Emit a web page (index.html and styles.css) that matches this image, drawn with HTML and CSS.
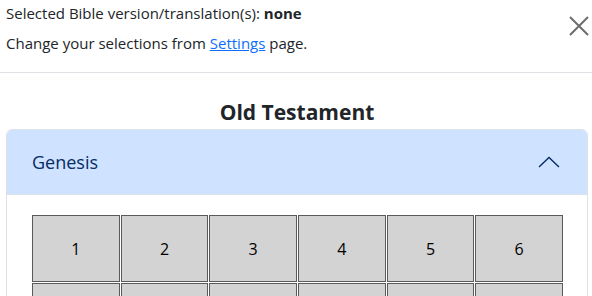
FILE: index.html
```html
<!DOCTYPE html>
<html lang="en">
<head>
    <meta charset="UTF-8">
    <title>Bible Books</title>
    <link rel="stylesheet" href="styles.css">
</head>
<body>
    <header class="top-bar">
        <div class="selection-info">
            <p class="line-one">Selected Bible version/translation(s): <b>none</b></p>
            <p class="line-two">Change your selections from <a href="#settings">Settings</a> page.</p>
        </div>
        <button class="close-btn" aria-label="Close">
            <svg width="22" height="22" viewBox="0 0 22 22">
                <path d="M2 2 L20 20 M20 2 L2 20" stroke="#6c6c6c" stroke-width="2" fill="none"/>
            </svg>
        </button>
    </header>

    <main class="content">
        <h2 class="testament-title">Old Testament</h2>
        <div class="accordion">
            <div class="accordion-header">
                <span class="book-name">Genesis</span>
                <svg class="chevron" width="22" height="12" viewBox="0 0 22 12">
                    <path d="M1 11 L11 1.5 L21 11" stroke="#052c65" stroke-width="1.4" fill="none"/>
                </svg>
            </div>
            <div class="accordion-body">
                <div class="chapter-grid">
                    <button class="chapter">1</button>
                    <button class="chapter">2</button>
                    <button class="chapter">3</button>
                    <button class="chapter">4</button>
                    <button class="chapter">5</button>
                    <button class="chapter">6</button>
                    <button class="chapter">7</button>
                    <button class="chapter">8</button>
                    <button class="chapter">9</button>
                    <button class="chapter">10</button>
                    <button class="chapter">11</button>
                    <button class="chapter">12</button>
                </div>
            </div>
        </div>
    </main>
</body>
</html>
```

FILE: styles.css
```css
body {
    margin: 0;
    font-family: "Open Sans", "Noto Sans", sans-serif;
    color: #212529;
    background-color: #ffffff;
    overflow: hidden;
}
.top-bar {
    display: flex;
    justify-content: space-between;
    align-items: flex-start;
    border-bottom: 1px solid #dee2e6;
    height: 72px;
}
.selection-info {
    padding-left: 6px;
}
.selection-info p {
    margin: 0;
    font-size: 15px;
    line-height: 24px;
}
.line-one {
    padding-top: 1px;
}
.line-two {
    padding-top: 6px;
}
.selection-info a {
    color: #0d6efd;
    text-decoration: underline;
}
.close-btn {
    border: none;
    background: none;
    padding: 0;
    margin: 15px 2px 0 0;
    width: 22px;
    height: 22px;
}
.content {
    padding: 0 4px 0 6px;
}
.testament-title {
    margin: 27px 0 5px;
    font-size: 21px;
    line-height: 24px;
    text-align: center;
    font-weight: 700;
}
.accordion {
    border: 1px solid #dee2e6;
    border-radius: 6px;
    overflow: hidden;
}
.accordion-header {
    display: flex;
    justify-content: space-between;
    align-items: center;
    height: 64px;
    padding: 0 27px 0 25px;
    background-color: #cfe2ff;
    border-bottom: 1px solid #dee2e6;
    color: #052c65;
    font-size: 18px;
}
.accordion-body {
    padding: 20px 24px 20px 25px;
}
.chapter-grid {
    display: grid;
    grid-template-columns: repeat(6, 1fr);
    gap: 1px;
}
.chapter {
    height: 67px;
    background-color: #d3d3d3;
    border: 1px solid #5a5a5a;
    font-family: "Open Sans", "Noto Sans", sans-serif;
    font-size: 16px;
    color: #000000;
    padding: 0;
}
```
